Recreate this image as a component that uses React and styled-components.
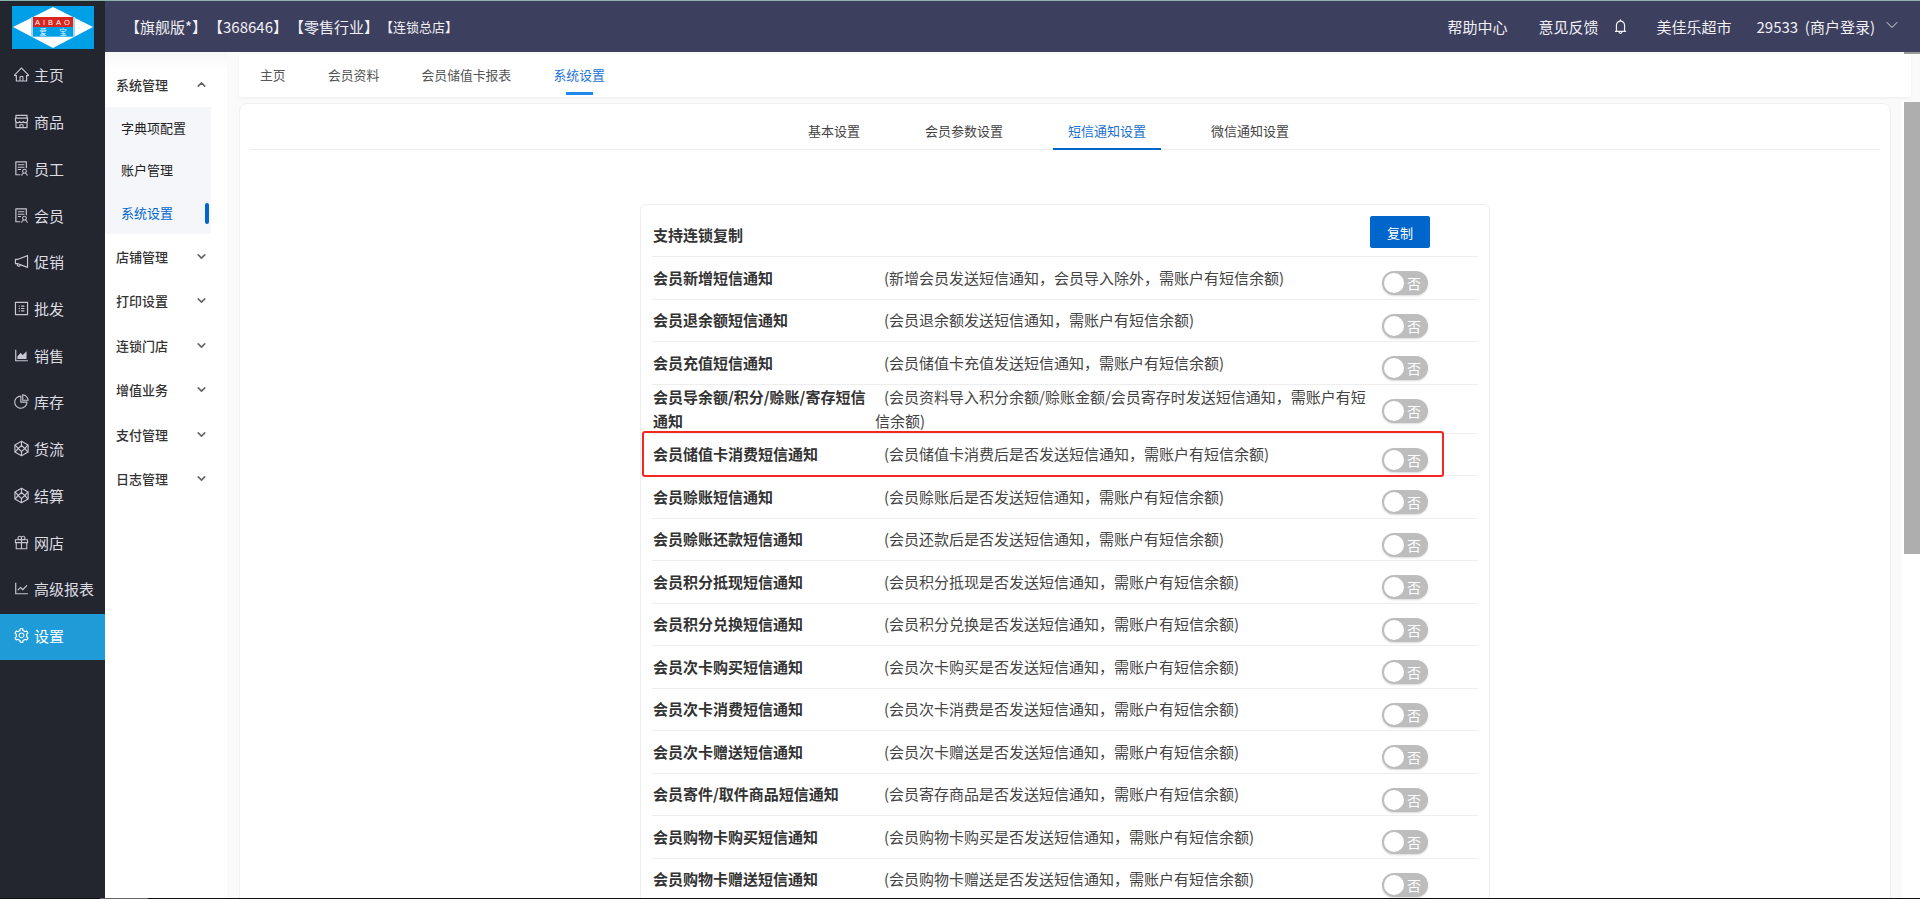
import React from 'react';
import styled, { createGlobalStyle } from 'styled-components';
import {
  AiOutlineHome, AiOutlineShop, AiOutlineSolution, AiOutlineNotification, AiOutlineProfile,
  AiOutlineAreaChart, AiOutlinePieChart, AiOutlineGift, AiOutlineLineChart,
  AiOutlineSetting, AiOutlineBell,
} from 'react-icons/ai';
import { ChevronDown, ChevronUp } from 'lucide-react';

const FONT = '"Noto Sans CJK SC", "Noto Sans", "Liberation Sans", sans-serif';

const Global = createGlobalStyle`
  html, body { margin: 0; padding: 0; height: 100%; overflow: hidden; }
  body { font-family: ${FONT}; color: #333; }
  * { box-sizing: border-box; }
`;

const Page = styled.div`
  width: 1920px; height: 899px; display: flex; flex-direction: column; overflow: hidden; background: #fafafa;
`;
const TopStrip = styled.div`height: 1px; flex: none; background: #8db3b0;`;
const Body = styled.div`flex: 1; min-height: 0; display: flex;`;
const BottomStrip = styled.div`height: 1px; flex: none; background: #111; padding-left: 100px;`;
const BottomThumb = styled.div`width: 48px; height: 1px; background: #666;`;

const Sidebar = styled.aside`width: 105px; flex: none; background: #23252f; display: flex; flex-direction: column;`;
const LogoBox = styled.div`height: 52px; flex: none; padding: 5px 0 0 12px;`;
const NavItem = styled.div`
  height: ${p => (p.$active ? '46px' : '46.72px')}; flex: none; display: flex; align-items: center; gap: 4px;
  padding: 0 0 ${p => (p.$active ? '2px' : '3px')} 13px;
  font-size: 15px; color: ${p => (p.$active ? '#fff' : '#dcdde2')}; background: ${p => (p.$active ? '#1f9cd8' : 'transparent')};
  svg { font-size: 17px; width: 17px; height: 17px; color: ${p => (p.$active ? '#fff' : '#c6c7cf')}; flex: none; }
`;

const Right = styled.div`flex: 1; min-width: 0; display: flex; flex-direction: column;`;
const Header = styled.header`
  height: 51px; flex: none; background: #3d3f5e; color: #f0f0f4; display: flex; align-items: center; font-size: 15px;
  padding: 0 18px 1px 20px;
`;
const HeaderInfo = styled.div`display: flex; align-items: center; white-space: nowrap; gap: 1px;`;
const InfoTag = styled.span`font-size: ${p => p.$small ? 13 : 15}px;`;
const HeaderActions = styled.div`margin-left: auto; display: flex; align-items: center; white-space: nowrap;`;
const HeaderLink = styled.span`margin-left: ${p => p.$gap || 0}px;`;
const BellIcon = styled(AiOutlineBell)`font-size: 17px; margin-left: 14px; color: #f0f0f4;`;
const CaretIcon = styled(ChevronDown)`margin-left: 7px; color: #f0f0f4; margin-top: -2px;`;

const Content = styled.div`flex: 1; min-height: 0; display: flex;`;
const SubMenu = styled.nav`
  width: 122px; flex: none; padding-top: 11px;
  background: linear-gradient(#f6f6f7 0, #fff 18px);
`;
const GroupTitle = styled.div`
  width: 106px; height: 44.4px; display: flex; align-items: center; justify-content: space-between; padding: 0 3px 2px 11px;
  font-size: 13px; font-weight: 500; color: #333;
  svg { color: #666; }
`;
const SubList = styled.div`width: 106px; background: #f4f6fa; height: 127px; margin-bottom: 1px;`;
const SubItem = styled.div`
  height: 42.33px; display: flex; align-items: center; padding: 0 0 2px 16px; position: relative; font-size: 13px;
  color: ${p => (p.$active ? '#0066cc' : '#222')};
  ${p => p.$active && `&::after { content: ''; position: absolute; right: 2px; top: 11px; width: 4px; height: 21px; border-radius: 2px; background: #0066cc; }`}
`;

const Main = styled.main`flex: 1; min-width: 0; display: flex; flex-direction: column; position: relative; padding-top: 2px;
  &::before { content: ''; position: absolute; top: 0; right: 0; width: 16px; height: 2px; background: #9a9a9a; }
`;
const TopTabs = styled.div`
  flex: none; height: 43px; margin: 0 9px 5px 12px; background: #fff; box-shadow: 0 1px 3px rgba(0,0,0,.06);
  display: flex; padding-left: 21px; gap: 42.4px;
`;
const TopTab = styled.div`
  height: 41px; display: flex; align-items: center; font-size: 12.8px; position: relative; padding-bottom: 1px;
  color: ${p => (p.$active ? '#1a73d8' : '#555')};
  ${p => p.$active && `&::after { content: ''; position: absolute; left: 12px; right: 12px; bottom: 0; height: 3px; background: #2288ee; }`}
`;
const ScrollRow = styled.div`flex: 1; min-height: 0; display: flex;`;
const Scroller = styled.div`
  flex: 1; min-width: 0; overflow: hidden; padding: 1px 11px 0 12px;
`;
const ScrollTrack = styled.div`width: 18px; flex: none; background: #fff; padding-left: 2px;`;
const ScrollThumb = styled.div`height: 452px; background: #aeaeae;`;
const Card = styled.section`
  background: #fff; border: 1px solid #f0f0f0; border-radius: 8px; min-height: 900px; padding: 0 10px;
`;
const CardTabs = styled.div`
  height: 46px; border-bottom: 1px solid #ececec; display: flex; padding-left: 543px; gap: 35px;
`;
const CardTab = styled.div`
  height: 46px; padding: 8px 15px 0; display: flex; align-items: center; font-size: 13px;
  color: ${p => (p.$active ? '#1a6fd0' : '#444')};
  border-bottom: 2px solid ${p => (p.$active ? '#0066cc' : 'transparent')};
`;
const Panel = styled.div`
  width: 850px; margin: 54px auto 0; border: 1px solid #eee; border-radius: 6px; padding: 0 11px;
`;
const PanelHead = styled.div`
  height: 52px; display: flex; padding-top: 11px; border-bottom: 1px solid #eee;
`;
const HeadLabel = styled.div`font-size: 15px; font-weight: 700; color: #333; line-height: 24px; margin: 7px 0 0 1px;`;
const CopyButton = styled.button`
  margin-left: auto; margin-right: 48px; width: 60px; height: 32px; border: 0; border-radius: 2px; background: #0066cc; color: #fff;
  font-family: inherit; font-size: 13px; padding: 0;
`;
const Row = styled.div`
  display: flex; align-items: center; min-height: 42.5px; border-bottom: 1px solid #eee; position: relative;
`;
const RowLabel = styled.div`
  flex: 0 0 223px; padding: 0 5px 0 1px; font-size: 15px; font-weight: 700; color: #333; line-height: 24px;
`;
const RowDesc = styled.div`
  flex: 0 0 497px; font-size: 15px; color: #444; line-height: 24px; text-indent: 9px;
`;
const Toggle = styled.div`
  width: 46px; height: 24px; margin: 14px 0 0 10px; align-self: flex-start; border-radius: 12px; background: #bdbdbd; flex: none;
  display: flex; align-items: center; padding: 0 2px; gap: 3px; color: #fff; font-size: 14px;
  box-shadow: 0 1px 2px rgba(0,0,0,.15);
`;
const Knob = styled.span`width: 20px; height: 20px; border-radius: 50%; background: #fff; flex: none;`;
const Highlight = styled.div`
  position: absolute; left: -10px; top: -3px; bottom: -2px; width: 802px; border: 2.5px solid #f5261f; border-radius: 3px; pointer-events: none;
`;

const Logo = () => (
  <svg width="82" height="43" viewBox="0 0 82 43" aria-label="AIBAO">
    <rect width="82" height="43" fill="#00a0e9" />
    <polygon points="1,21 41,1 81,21 41,42" fill="#fff" />
    <rect x="19" y="11" width="44" height="20" fill="#9fd8f2" />
    <rect x="21" y="11" width="40" height="10" fill="#d9241f" />
    <rect x="21" y="21" width="40" height="9.5" fill="#00a0e9" />
    <text x="42" y="19" textAnchor="middle" fill="#fff" fontSize="7.5" letterSpacing="3" fontFamily="Liberation Sans, sans-serif">AIBAO</text>
    <text x="31" y="29" textAnchor="middle" fill="#e8f6fd" fontSize="7.5" fontFamily={FONT}>爱</text>
    <text x="51" y="29" textAnchor="middle" fill="#e8f6fd" fontSize="7.5" fontFamily={FONT}>宝</text>
  </svg>
);

const CubeIcon = () => (
  <svg viewBox="0 0 16 16" fill="none" stroke="currentColor" strokeWidth="1.1" strokeLinejoin="round">
    <polygon points="8,1.2 14.2,4.6 14.2,11.4 8,14.8 1.8,11.4 1.8,4.6" />
    <polygon points="8,5 11,8 8,11 5,8" />
    <path d="M8 1.2V5M8 11v3.8M1.8 4.6 5 8 1.8 11.4M14.2 4.6 11 8l3.2 3.4" />
  </svg>
);

const nav = [
  [AiOutlineHome, '主页'], [AiOutlineShop, '商品'], [AiOutlineSolution, '员工'], [AiOutlineSolution, '会员'],
  [AiOutlineNotification, '促销'], [AiOutlineProfile, '批发'], [AiOutlineAreaChart, '销售'], [AiOutlinePieChart, '库存'],
  [CubeIcon, '货流'], [CubeIcon, '结算'], [AiOutlineGift, '网店'], [AiOutlineLineChart, '高级报表'],
  [AiOutlineSetting, '设置'],
];

const rows = [
  ['会员新增短信通知', '(新增会员发送短信通知，会员导入除外，需账户有短信余额)'],
  ['会员退余额短信通知', '(会员退余额发送短信通知，需账户有短信余额)'],
  ['会员充值短信通知', '(会员储值卡充值发送短信通知，需账户有短信余额)'],
  ['会员导余额/积分/赊账/寄存短信通知', '(会员资料导入积分余额/赊账金额/会员寄存时发送短信通知，需账户有短信余额)'],
  ['会员储值卡消费短信通知', '(会员储值卡消费后是否发送短信通知，需账户有短信余额)', true],
  ['会员赊账短信通知', '(会员赊账后是否发送短信通知，需账户有短信余额)'],
  ['会员赊账还款短信通知', '(会员还款后是否发送短信通知，需账户有短信余额)'],
  ['会员积分抵现短信通知', '(会员积分抵现是否发送短信通知，需账户有短信余额)'],
  ['会员积分兑换短信通知', '(会员积分兑换是否发送短信通知，需账户有短信余额)'],
  ['会员次卡购买短信通知', '(会员次卡购买是否发送短信通知，需账户有短信余额)'],
  ['会员次卡消费短信通知', '(会员次卡消费是否发送短信通知，需账户有短信余额)'],
  ['会员次卡赠送短信通知', '(会员次卡赠送是否发送短信通知，需账户有短信余额)'],
  ['会员寄件/取件商品短信通知', '(会员寄存商品是否发送短信通知，需账户有短信余额)'],
  ['会员购物卡购买短信通知', '(会员购物卡购买是否发送短信通知，需账户有短信余额)'],
  ['会员购物卡赠送短信通知', '(会员购物卡赠送是否发送短信通知，需账户有短信余额)'],
];

export default function App() {
  return (
    <Page>
      <Global />
      <TopStrip />
      <Body>
        <Sidebar>
          <LogoBox><Logo /></LogoBox>
          {nav.map(([Icon, label]) => (
            <NavItem key={label} $active={label === '设置'}><Icon />{label}</NavItem>
          ))}
        </Sidebar>
        <Right>
          <Header>
            <HeaderInfo>
              <InfoTag>【旗舰版*】</InfoTag>
              <InfoTag>【368646】</InfoTag>
              <InfoTag>【零售行业】</InfoTag>
              <InfoTag $small>【连锁总店】</InfoTag>
            </HeaderInfo>
            <HeaderActions>
              <HeaderLink>帮助中心</HeaderLink>
              <HeaderLink $gap={31}>意见反馈</HeaderLink>
              <BellIcon />
              <HeaderLink $gap={27}>美佳乐超市</HeaderLink>
              <HeaderLink $gap={25}>29533&nbsp;&nbsp;(商户登录)</HeaderLink>
              <CaretIcon size={20} strokeWidth={1.1} />
            </HeaderActions>
          </Header>
          <Content>
            <SubMenu>
              <GroupTitle>系统管理<ChevronUp size={13} strokeWidth={3} /></GroupTitle>
              <SubList>
                <SubItem>字典项配置</SubItem>
                <SubItem>账户管理</SubItem>
                <SubItem $active>系统设置</SubItem>
              </SubList>
              {['店铺管理', '打印设置', '连锁门店', '增值业务', '支付管理', '日志管理'].map(t => (
                <GroupTitle key={t}>{t}<ChevronDown size={13} strokeWidth={3} /></GroupTitle>
              ))}
            </SubMenu>
            <Main>
              <TopTabs>
                <TopTab>主页</TopTab>
                <TopTab>会员资料</TopTab>
                <TopTab>会员储值卡报表</TopTab>
                <TopTab $active>系统设置</TopTab>
              </TopTabs>
              <ScrollRow>
                <Scroller>
                  <Card>
                    <CardTabs>
                      <CardTab>基本设置</CardTab>
                      <CardTab>会员参数设置</CardTab>
                      <CardTab $active>短信通知设置</CardTab>
                      <CardTab>微信通知设置</CardTab>
                    </CardTabs>
                    <Panel>
                      <PanelHead>
                        <HeadLabel>支持连锁复制</HeadLabel>
                        <CopyButton>复制</CopyButton>
                      </PanelHead>
                      {rows.map(([label, desc, marked]) => (
                        <Row key={label}>
                          <RowLabel>{label}</RowLabel>
                          <RowDesc>{desc}</RowDesc>
                          <Toggle><Knob />否</Toggle>
                          {marked && <Highlight />}
                        </Row>
                      ))}
                    </Panel>
                  </Card>
                </Scroller>
                <ScrollTrack><ScrollThumb /></ScrollTrack>
              </ScrollRow>
            </Main>
          </Content>
        </Right>
      </Body>
      <BottomStrip><BottomThumb /></BottomStrip>
    </Page>
  );
}
